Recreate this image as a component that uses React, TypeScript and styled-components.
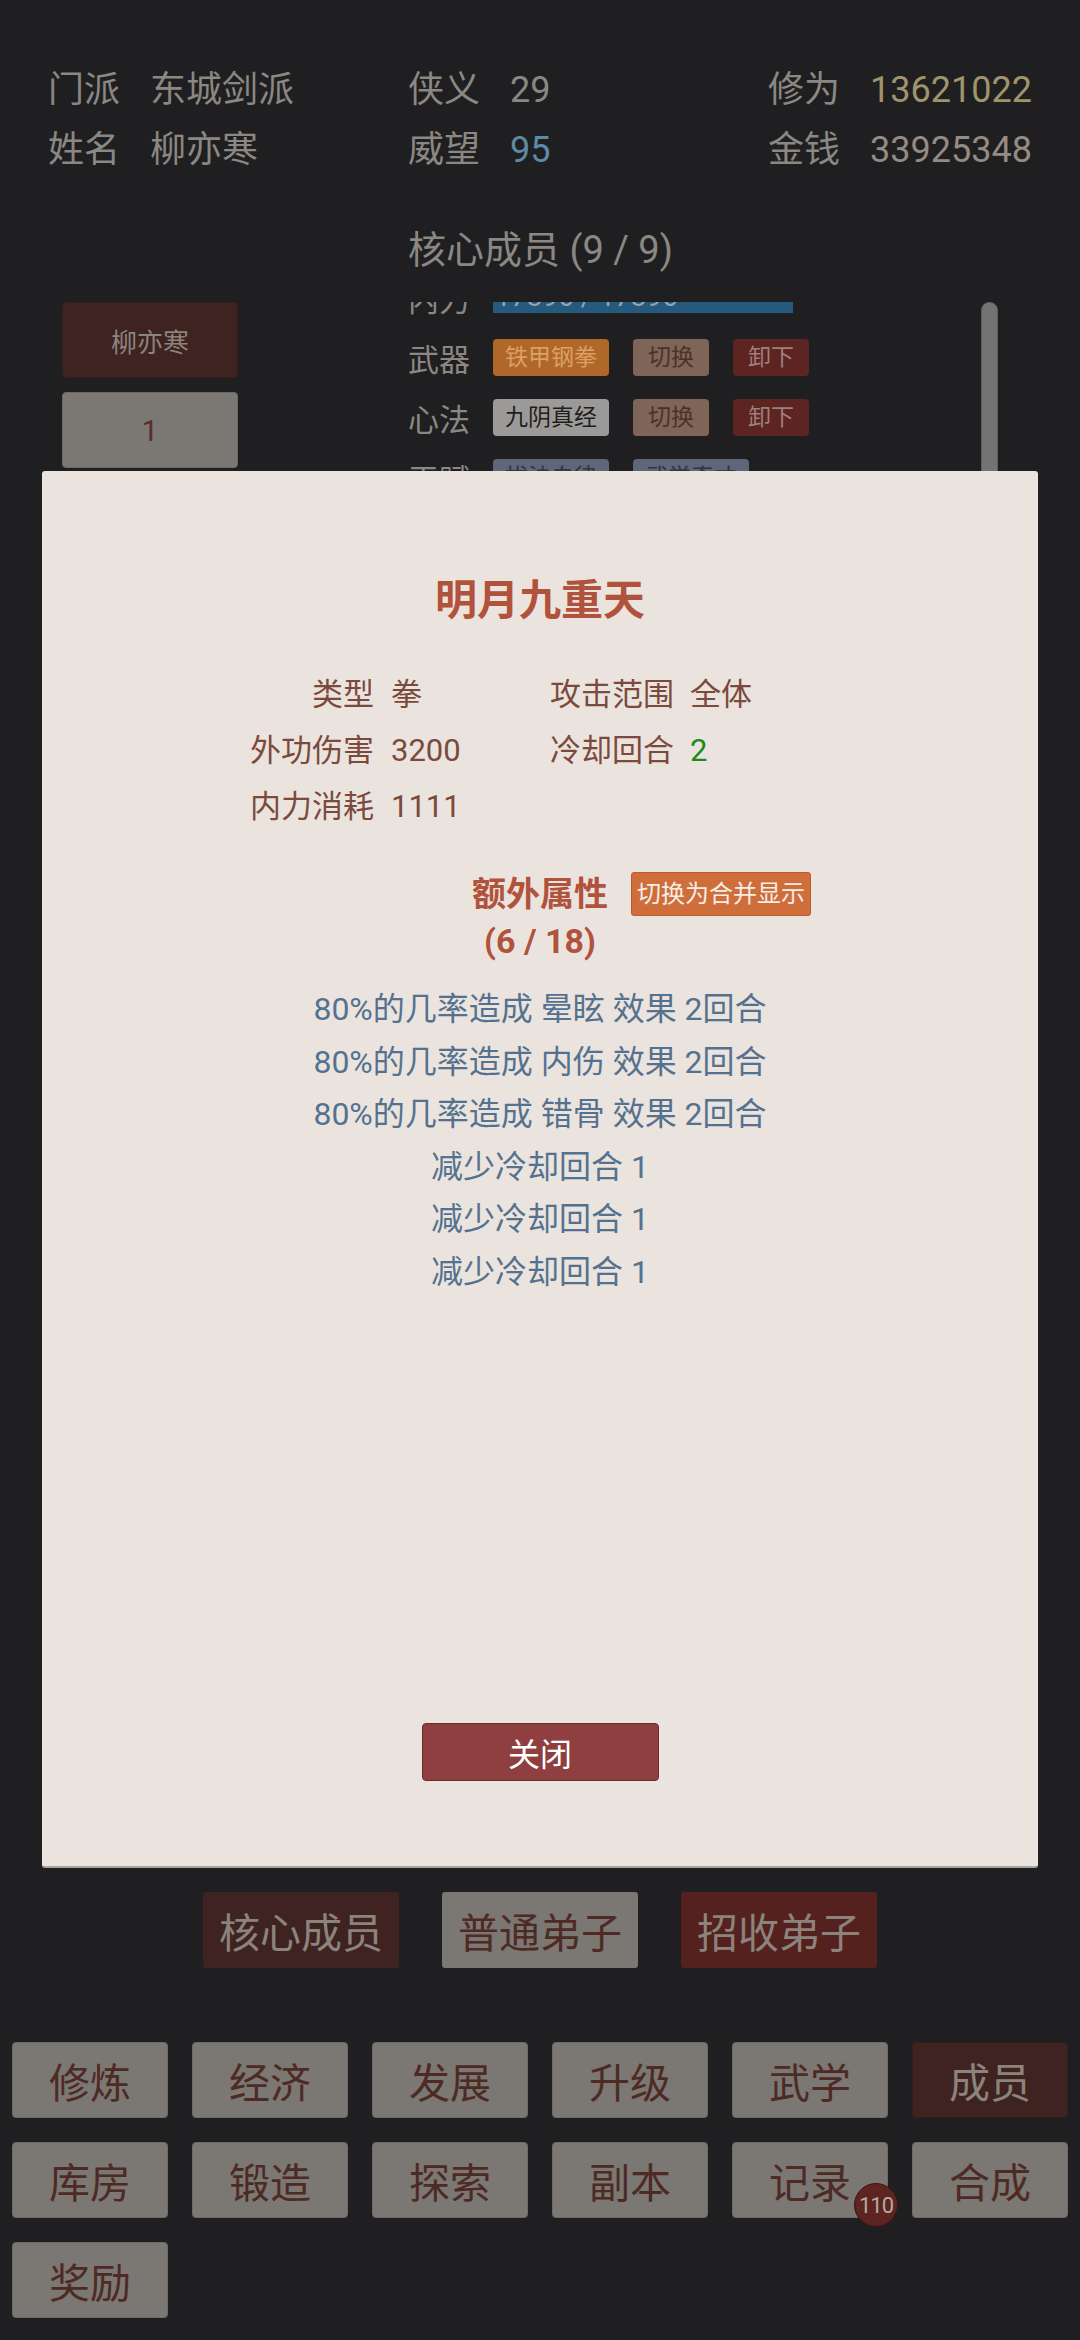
import React from "react";
import styled, { createGlobalStyle } from "styled-components";

const GlobalStyle = createGlobalStyle`
  html, body { margin: 0; padding: 0; background: #1f1f21; }
  body { font-family: Roboto, "Noto Sans CJK SC", sans-serif; }
  * { box-sizing: border-box; }
`;

const Page = styled.div`
  position: relative;
  width: 1080px;
  height: 2340px;
  background: #1f1f21;
  overflow: hidden;
`;

const Header = styled.div`
  display: grid;
  grid-template-columns: 360px 360px 312px;
  padding: 60px 0 0 48px;
`;

const StatItem = styled.div`
  display: flex;
  gap: 30px;
  font-size: 36px;
  line-height: 60px;
  color: #8b8782;
  white-space: nowrap;
`;

const StatValue = styled.span<{ $color?: string }>`
  color: ${(p) => p.$color || "#8b8782"};
`;

const SectionTitle = styled.div`
  margin-top: 40px;
  padding-left: 408px;
  font-size: 38px;
  line-height: 60px;
  color: #8b8782;
`;

const Main = styled.div`
  display: flex;
  margin-top: 22px;
  height: 1566px;
`;

const MemberColumn = styled.div`
  width: 408px;
  padding-left: 62px;
  display: flex;
  flex-direction: column;
  gap: 14px;
`;

const MemberButton = styled.div<{ $active?: boolean }>`
  width: 176px;
  height: 76px;
  border-radius: 4px;
  display: flex;
  align-items: center;
  justify-content: center;
  background: ${(p) => (p.$active ? "#3e2320" : "#7b7773")};
  color: ${(p) => (p.$active ? "#8c837d" : "#55302a")};
  font-size: ${(p) => (p.$active ? "26px" : "30px")};
  border: 1px solid ${(p) => (p.$active ? "#351d1a" : "#6d6965")};
`;

const DetailColumn = styled.div`
  display: flex;
  align-items: flex-start;
`;

const ScrollArea = styled.div`
  width: 573px;
  height: 600px;
  overflow: hidden;
`;

const ScrollContent = styled.div`
  margin-top: -35px;
  display: flex;
  flex-direction: column;
`;

const DetailRow = styled.div`
  height: 60px;
  display: flex;
  align-items: center;
  gap: 24px;
`;

const RowLabel = styled.span`
  font-size: 31px;
  color: #8b8782;
  width: 62px;
  margin-right: -1px;
  white-space: nowrap;
`;

const Bar = styled.div`
  width: 300px;
  height: 32px;
  background: #245a7e;
  color: #97a3ab;
  font-size: 28px;
  line-height: 32px;
  padding-left: 2px;
  white-space: nowrap;
`;

const Tag = styled.span<{ $bg: string; $fg: string; $wide?: boolean }>`
  height: 37px;
  line-height: 37px;
  padding: 0 ${(p) => (p.$wide ? "15px" : "12px")};
  border-radius: 4px;
  font-size: 23px;
  background: ${(p) => p.$bg};
  color: ${(p) => p.$fg};
  white-space: nowrap;
`;

const Scrollbar = styled.div`
  width: 17px;
  height: 220px;
  border-radius: 8px;
  background: #737373;
  border: 1px solid #5e5e5e;
`;

const TabRow = styled.div`
  display: flex;
  justify-content: center;
  gap: 43px;
  margin-top: 24px;
`;

const TabButton = styled.div<{ $variant: "current" | "plain" | "red" }>`
  width: 196px;
  height: 76px;
  border-radius: 3px;
  display: flex;
  align-items: center;
  justify-content: center;
  font-size: 41px;
  background: ${(p) =>
    p.$variant === "current" ? "#3e2320" : p.$variant === "red" ? "#55211e" : "#7b7773"};
  color: ${(p) => (p.$variant === "plain" ? "#4e2a25" : "#8c837d")};
`;

const NavGrid = styled.div`
  display: grid;
  grid-template-columns: repeat(6, 156px);
  column-gap: 24px;
  row-gap: 24px;
  padding: 0 12px;
  margin-top: 74px;
`;

const NavButton = styled.div<{ $active?: boolean }>`
  position: relative;
  height: 76px;
  border-radius: 4px;
  display: flex;
  align-items: center;
  justify-content: center;
  font-size: 41px;
  background: ${(p) => (p.$active ? "#3e2320" : "#7b7773")};
  color: ${(p) => (p.$active ? "#8c837d" : "#4e2a25")};
  border: 1px solid ${(p) => (p.$active ? "#351d1a" : "#6e6a66")};
`;

const Badge = styled.span`
  position: absolute;
  left: 121px;
  top: 40px;
  width: 44px;
  height: 44px;
  border-radius: 50%;
  background: #5e2420;
  border: 1px solid #3a1614;
  color: #b3aaa4;
  font-size: 22px;
  display: flex;
  align-items: center;
  justify-content: center;
  letter-spacing: -1px;
`;

const Modal = styled.div`
  position: absolute;
  left: 42px;
  top: 471px;
  width: 996px;
  height: 1397px;
  background: #ebe4de;
  border-radius: 3px;
  border-bottom: 2px solid #aaa49e;
  display: flex;
  flex-direction: column;
  align-items: center;
  padding-top: 100px;
`;

const ModalTitle = styled.div`
  font-size: 42px;
  font-weight: bold;
  line-height: 60px;
  color: #b1533c;
`;

const StatsGrid = styled.div`
  align-self: flex-start;
  margin: 36px 0 0 208px;
  display: grid;
  grid-template-columns: 124px 142px 123px auto;
  column-gap: 17px;
  font-size: 31px;
  line-height: 56px;
  color: #7b4a3d;
`;

const StatLabel = styled.span`
  text-align: right;
  white-space: nowrap;
`;

const StatVal = styled.span<{ $green?: boolean }>`
  color: ${(p) => (p.$green ? "#1c8a1c" : "#7b4a3d")};
  white-space: nowrap;
`;

const ExtraHeader = styled.div`
  width: 100%;
  margin-top: 36px;
  display: grid;
  grid-template-columns: 1fr auto 1fr;
  align-items: start;
`;

const ExtraTitle = styled.div`
  grid-column: 2;
  text-align: center;
  font-size: 34px;
  font-weight: bold;
  line-height: 47px;
  color: #b1533c;
  & > span { display: block; }
`;

const ToggleButton = styled.div`
  grid-column: 3;
  justify-self: start;
  margin-left: 23px;
  margin-top: 1px;
  height: 44px;
  line-height: 42px;
  padding: 0 5px;
  font-size: 24px;
  color: #f6ede6;
  background: #cf6d3b;
  border: 1px solid #b95d30;
  border-radius: 3px;
  white-space: nowrap;
`;

const AttrList = styled.div`
  margin-top: 18px;
  text-align: center;
  font-size: 32px;
  line-height: 52.6px;
  color: #54728f;
`;

const CloseButton = styled.div`
  margin-top: auto;
  margin-bottom: 85px;
  width: 237px;
  height: 58px;
  display: flex;
  align-items: center;
  justify-content: center;
  font-size: 32px;
  color: #ffffff;
  background: #8f3f40;
  border: 1px solid #6e2b2b;
  border-radius: 4px;
`;

const navItems = [
  "修炼", "经济", "发展", "升级", "武学", "成员",
  "库房", "锻造", "探索", "副本", "记录", "合成",
  "奖励",
];

const attrs = [
  "80%的几率造成 晕眩 效果 2回合",
  "80%的几率造成 内伤 效果 2回合",
  "80%的几率造成 错骨 效果 2回合",
  "减少冷却回合 1",
  "减少冷却回合 1",
  "减少冷却回合 1",
];

export default function App() {
  return (
    <Page>
      <GlobalStyle />
      <Header>
        <StatItem>门派<StatValue>东城剑派</StatValue></StatItem>
        <StatItem>侠义<StatValue>29</StatValue></StatItem>
        <StatItem>修为<StatValue $color="#a0946c">13621022</StatValue></StatItem>
        <StatItem>姓名<StatValue>柳亦寒</StatValue></StatItem>
        <StatItem>威望<StatValue $color="#5d8aa5">95</StatValue></StatItem>
        <StatItem>金钱<StatValue $color="#958b83">33925348</StatValue></StatItem>
      </Header>
      <SectionTitle>核心成员 (9 / 9)</SectionTitle>
      <Main>
        <MemberColumn>
          <MemberButton $active>柳亦寒</MemberButton>
          <MemberButton>1</MemberButton>
        </MemberColumn>
        <DetailColumn>
          <ScrollArea>
            <ScrollContent>
              <DetailRow>
                <RowLabel>内力</RowLabel>
                <Bar>17896 / 17896</Bar>
              </DetailRow>
              <DetailRow>
                <RowLabel>武器</RowLabel>
                <Tag $bg="#b0672a" $fg="#dc9f66">铁甲钢拳</Tag>
                <Tag $wide $bg="#7f6558" $fg="#4a3229">切换</Tag>
                <Tag $wide $bg="#5d2421" $fg="#9c807a">卸下</Tag>
              </DetailRow>
              <DetailRow>
                <RowLabel>心法</RowLabel>
                <Tag $bg="#9c9a98" $fg="#1e1e1e">九阴真经</Tag>
                <Tag $wide $bg="#7f6558" $fg="#4a3229">切换</Tag>
                <Tag $wide $bg="#5d2421" $fg="#9c807a">卸下</Tag>
              </DetailRow>
              <DetailRow>
                <RowLabel>天赋</RowLabel>
                <Tag $bg="#5e6679" $fg="#2f3442">拔法自律</Tag>
                <Tag $bg="#5e6679" $fg="#2f3442">武学奇才</Tag>
              </DetailRow>
            </ScrollContent>
          </ScrollArea>
          <Scrollbar />
        </DetailColumn>
      </Main>
      <TabRow>
        <TabButton $variant="current">核心成员</TabButton>
        <TabButton $variant="plain">普通弟子</TabButton>
        <TabButton $variant="red">招收弟子</TabButton>
      </TabRow>
      <NavGrid>
        {navItems.map((n) => (
          <NavButton key={n} $active={n === "成员"}>
            {n}
            {n === "记录" && <Badge>110</Badge>}
          </NavButton>
        ))}
      </NavGrid>

      <Modal>
        <ModalTitle>明月九重天</ModalTitle>
        <StatsGrid>
          <StatLabel>类型</StatLabel>
          <StatVal>拳</StatVal>
          <StatLabel>攻击范围</StatLabel>
          <StatVal>全体</StatVal>
          <StatLabel>外功伤害</StatLabel>
          <StatVal>3200</StatVal>
          <StatLabel>冷却回合</StatLabel>
          <StatVal $green>2</StatVal>
          <StatLabel>内力消耗</StatLabel>
          <StatVal>1111</StatVal>
        </StatsGrid>
        <ExtraHeader>
          <ExtraTitle>
            <span>额外属性</span>
            <span>(6 / 18)</span>
          </ExtraTitle>
          <ToggleButton>切换为合并显示</ToggleButton>
        </ExtraHeader>
        <AttrList>
          {attrs.map((a, i) => (
            <div key={i}>{a}</div>
          ))}
        </AttrList>
        <CloseButton>关闭</CloseButton>
      </Modal>
    </Page>
  );
}
